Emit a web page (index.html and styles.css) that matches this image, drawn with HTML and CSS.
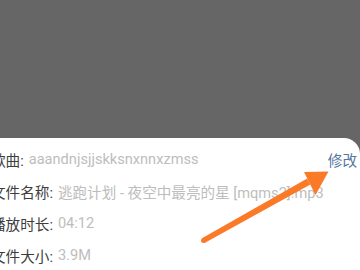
FILE: index.html
```html
<!DOCTYPE html>
<html lang="zh-CN">
<head>
    <meta charset="UTF-8">
    <meta name="viewport" content="width=device-width, initial-scale=1.0">
    <title>歌曲信息</title>
    <link rel="stylesheet" href="styles.css">
</head>
<body>

<div class="sheet">
    <div class="row">
        <span class="label">歌曲:</span>
        <span class="value">aaandnjsjjskksnxnnxzmss</span>
        <a class="edit" href="#">修改</a>
    </div>
    <div class="row">
        <span class="label">文件名称:</span>
        <span class="value">逃跑计划 - 夜空中最亮的星 [mqms2].mp3</span>
    </div>
    <div class="row">
        <span class="label">播放时长:</span>
        <span class="value">04:12</span>
    </div>
    <div class="row">
        <span class="label">文件大小:</span>
        <span class="value">3.9M</span>
    </div>

    <!-- annotation arrow pointing at the edit link -->
    <svg class="arrow" width="360" height="270" viewBox="0 0 360 270">
        <path d="M202 238.2 L307.2 178.4 L310.4 184.6 L205 242.8 Z" fill="#fa7a28"/>
        <circle cx="203.5" cy="240.5" r="2.5" fill="#fa7a28"/>
        <path d="M328.5 171.5 L304 172 L315.5 195 Z" fill="#fa7a28"/>
    </svg>
</div>

</body>
</html>
```

FILE: styles.css
```css
html, body {
    margin: 0;
    padding: 0;
}
body {
    width: 360px;
    height: 270px;
    overflow: hidden;
    background: #666666;
    font-family: Roboto, "Noto Sans CJK SC", sans-serif;
    font-size: 14.6px;
}
.sheet {
    margin-top: 138px;
    margin-left: -26px;
    height: 127px;
    background: #ffffff;
    border-radius: 16px 16px 0 0;
    padding: 5px 3px 0 17px;
}
.row {
    display: flex;
    align-items: center;
    height: 32px;
    white-space: nowrap;
}
.label {
    color: #3d3d3d;
}
.value {
    color: #bdbdbd;
    margin-left: 5px;
}
.edit {
    margin-left: auto;
    color: #54779e;
    text-decoration: none;
}
.arrow {
    position: absolute;
    left: 0;
    top: 0;
    pointer-events: none;
}
```
